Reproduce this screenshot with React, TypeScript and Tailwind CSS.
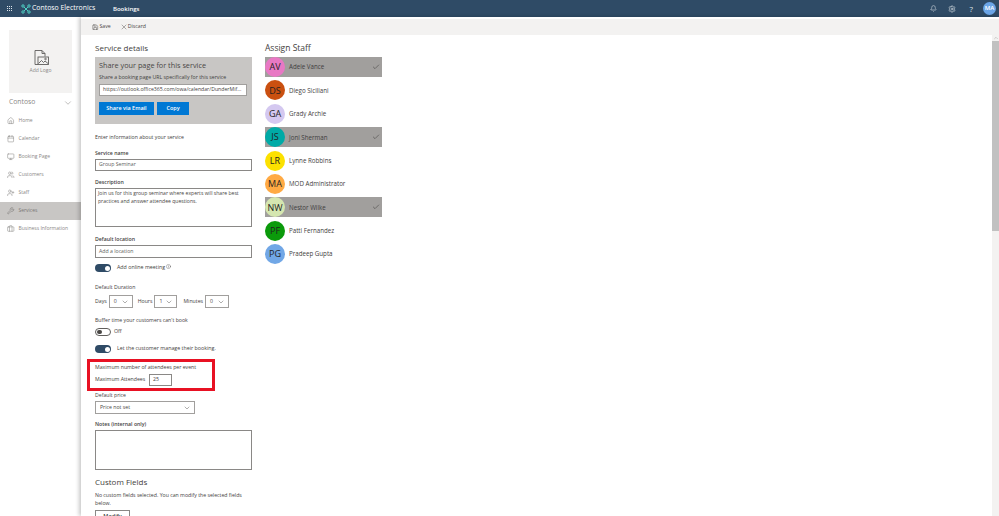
import React from "react";
import { Bell, Settings, ChevronDown, Check, Home, Calendar, Monitor, Users, UserPlus, Wrench, Briefcase, Save, X, Info, ChevronUp } from "lucide-react";

const font = { fontFamily: '"Open Sans", "Noto Sans", sans-serif' };

const staff = [
  { i: "AV", n: "Adele Vance", c: "bg-[#e878c4]", s: true },
  { i: "DS", n: "Diego Siciliani", c: "bg-[#ca5010]", s: false },
  { i: "GA", n: "Grady Archie", c: "bg-[#d4c8f0]", s: false },
  { i: "JS", n: "Joni Sherman", c: "bg-[#00aaa6]", s: true },
  { i: "LR", n: "Lynne Robbins", c: "bg-[#fce100]", s: false },
  { i: "MA", n: "MOD Administrator", c: "bg-[#ffaa44]", s: false },
  { i: "NW", n: "Nestor Wilke", c: "bg-[#d5e6b0]", s: true },
  { i: "PF", n: "Patti Fernandez", c: "bg-[#0b9a0b]", s: false },
  { i: "PG", n: "Pradeep Gupta", c: "bg-[#71a7e6]", s: false },
];

const nav = [
  { n: "Home", I: Home },
  { n: "Calendar", I: Calendar },
  { n: "Booking Page", I: Monitor },
  { n: "Customers", I: Users },
  { n: "Staff", I: UserPlus },
  { n: "Services", I: Wrench, a: true },
  { n: "Business Information", I: Briefcase },
];

function Toggle({ on }: { on: boolean }) {
  return on ? (
    <div className="w-[16px] h-[8px] rounded-full bg-[#2f4b66] flex items-center justify-end px-[1.5px] shrink-0">
      <div className="w-[5px] h-[5px] rounded-full bg-white" />
    </div>
  ) : (
    <div className="w-[16px] h-[8px] rounded-full border border-[#605e5c] bg-white flex items-center px-[1px] shrink-0">
      <div className="w-[4.5px] h-[4.5px] rounded-full bg-[#484644]" />
    </div>
  );
}

function Sel({ v, w }: { v: string; w: string }) {
  return (
    <div className={`${w} h-[13px] border border-[#a19f9d] flex items-center justify-between pl-[4px] pr-[3px] text-[5.2px] text-[#484644] bg-white`}>
      <span>{v}</span>
      <ChevronDown size={8} strokeWidth={1.5} className="text-[#605e5c]" />
    </div>
  );
}

export default function App() {
  return (
    <div style={font} className="w-[999px] h-[516px] overflow-hidden flex flex-col bg-white text-[#3f3e3d]">
      <header className="h-[17px] bg-[#2f4b66] flex items-center text-white shrink-0">
        <div className="w-[18px] flex justify-center">
          <div className="grid grid-cols-3 gap-[1px]">
            {Array.from({ length: 9 }).map((_, i) => (
              <div key={i} className="w-[1px] h-[1px] bg-[#dfe5ea]" />
            ))}
          </div>
        </div>
        <svg width="10" height="10" viewBox="0 0 10 10" className="ml-[3px]" fill="none" stroke="#4fd0c4" strokeWidth="1">
          <circle cx="2" cy="2" r="1.2" />
          <circle cx="8" cy="2" r="1.2" />
          <circle cx="2" cy="8" r="1.2" />
          <circle cx="8" cy="8" r="1.2" />
          <path d="M3 3l4 4M7 3L3 7" />
        </svg>
        <span className="ml-[1px] text-[6.9px] font-medium leading-none w-[81px] whitespace-nowrap">Contoso Electronics</span>
        <span className="text-[6px] font-semibold leading-none">Bookings</span>
        <div className="ml-auto flex items-center">
          <Bell size={7} strokeWidth={1.8} className="mr-[11px] text-[#dfe5ea]" />
          <Settings size={8} strokeWidth={1.8} className="mr-[14px] text-[#dfe5ea]" />
          <span className="mr-[10px] text-[8px] leading-none text-[#dfe5ea]">?</span>
          <div className="w-[13px] h-[13px] mr-[3px] rounded-full bg-[#6ba5e7] text-[6px] flex items-center justify-center text-white font-semibold">MA</div>
        </div>
      </header>

      <div className="flex flex-1 min-h-0">
        <aside className="w-[81px] shrink-0 flex flex-col pt-[13px] text-[#8a8886]">
          <div className="mx-[9px] w-[63px] h-[63px] bg-[#f3f2f1] flex flex-col items-center justify-center gap-[1px]">
            <svg width="17" height="17" viewBox="0 0 17 17" fill="none" stroke="#605e5c" strokeWidth="0.9">
              <path d="M3 15.5V1.5h7l3 3v3" />
              <path d="M10 1.5v3h3" />
              <path d="M3 15.5h3" />
              <rect x="6" y="8" width="10.5" height="7.5" />
              <path d="M6.5 14.5l3-3 2 2 1.5-1.5 3 2.5" />
              <circle cx="13.5" cy="10" r="0.8" />
            </svg>
            <span className="text-[5px]">Add Logo</span>
          </div>
          <div className="mx-[9px] mt-[1px] h-[17px] flex items-center justify-between text-[6.8px]">
            <span>Contoso</span>
            <ChevronDown size={10} strokeWidth={1.3} className="mr-[-1px]" />
          </div>
          <nav className="flex flex-col mt-[1px]">
            {nav.map(({ n, I, a }) => (
              <div key={n} className={`h-[18px] flex items-center pl-[7px] gap-[4px] text-[5px] whitespace-nowrap ${a ? "bg-[#c8c6c4] text-[#797775]" : ""}`}>
                <I size={7.5} strokeWidth={1.7} />
                <span>{n}</span>
              </div>
            ))}
          </nav>
        </aside>

        <main className="flex-1 min-w-0 flex flex-col shadow-[-2px_0_4px_rgba(0,0,0,0.22)] relative pt-[2px]">
          <div className="h-[16px] bg-[#f3f2f1] flex items-center pl-[11px] text-[5.2px] shrink-0 text-[#484644]">
            <Save size={6.5} strokeWidth={1.8} className="mr-[1px]" />
            <span>Save</span>
            <X size={8} strokeWidth={1.3} className="ml-[9px] mr-[0px]" />
            <span>Discard</span>
          </div>

          <div className="flex-1 flex min-h-0 overflow-hidden">
            <div className="flex-1 flex pl-[14px] pt-[7px] gap-[13px] min-w-0">
              <section className="w-[157px] shrink-0 relative">
                <h2 className="text-[8px] leading-[12px] h-[15px]">Service details</h2>
                <div className="h-[67px] bg-[#c8c6c4] pt-[4px] px-[4px] flex flex-col">
                  <div className="text-[7.3px] leading-[9px] text-[#484644]">Share your page for this service</div>
                  <div className="text-[5.2px] leading-[7px] mt-[4px]">Share a booking page URL specifically for this service</div>
                  <div className="mt-[3px] h-[12px] bg-white border border-[#a19f9d] flex items-center pl-[3px] text-[5.2px] whitespace-nowrap overflow-hidden w-[148px]">https://outlook.office365.com/owa/calendar/DunderMif...</div>
                  <div className="flex gap-[3px] mt-[6px]">
                    <div className="w-[55px] h-[13px] bg-[#0078d4] text-white text-[5.5px] font-semibold flex items-center justify-center">Share via Email</div>
                    <div className="w-[32px] h-[13px] bg-[#0078d4] text-white text-[5.5px] font-semibold flex items-center justify-center">Copy</div>
                  </div>
                </div>

                <p className="text-[5.2px] leading-[7px] mt-[10px]">Enter information about your service</p>
                <label className="block text-[5.2px] font-semibold leading-[7px] mt-[9px]">Service name</label>
                <div className="mt-[2px] h-[12px] border border-[#8a8886] flex items-center pl-[3px] text-[5.2px] text-[#605e5c]">Group Seminar</div>
                <label className="block text-[5.2px] font-semibold leading-[7px] mt-[8px]">Description</label>
                <div className="mt-[2px] h-[39px] border border-[#8a8886] px-[2px] py-[1px] text-[5.1px] leading-[7.5px] text-[#484644]">Join us for this group seminar where experts will share best practices and answer attendee questions.</div>
                <label className="block text-[5.2px] font-semibold leading-[7px] mt-[9px]">Default location</label>
                <div className="mt-[2px] h-[13px] border border-[#8a8886] flex items-center pl-[3px] text-[5.2px] text-[#605e5c]">Add a location</div>
                <div className="flex items-center mt-[6px] h-[8px] text-[5.3px]">
                  <Toggle on />
                  <span className="ml-[6px]">Add online meeting</span>
                  <Info size={5} strokeWidth={1.6} className="ml-[1px] mt-[-3px]" />
                </div>
                <p className="text-[5.2px] leading-[7px] mt-[12px]">Default Duration</p>
                <div className="flex items-center text-[5.2px] mt-[4px] h-[13px]">
                  <span className="mr-[2px]">Days</span>
                  <Sel v="0" w="w-[24px]" />
                  <span className="ml-[5px] mr-[2px]">Hours</span>
                  <Sel v="1" w="w-[23px]" />
                  <span className="ml-[6px] mr-[2px]">Minutes</span>
                  <Sel v="0" w="w-[24px]" />
                </div>
                <p className="text-[5.2px] leading-[7px] mt-[9px]">Buffer time your customers can't book</p>
                <div className="flex items-center mt-[4px] h-[8px] text-[5.3px]">
                  <Toggle on={false} />
                  <span className="ml-[3px]">Off</span>
                </div>
                <div className="flex items-center mt-[9px] h-[8px] text-[5.3px]">
                  <Toggle on />
                  <span className="ml-[6px]">Let the customer manage their booking.</span>
                </div>
                <p className="text-[5.2px] leading-[7px] mt-[11px]">Maximum number of attendees per event</p>
                <div className="flex items-center mt-[3px] h-[12px] text-[5.2px]">
                  <span className="w-[54px]">Maximum Attendees</span>
                  <div className="w-[23px] h-[12px] border border-[#8a8886] flex items-center pl-[3px]">25</div>
                </div>
                <div className="absolute left-[-8px] top-[317px] w-[128px] h-[32px] border-[3px] border-[#e81123] pointer-events-none" />
                <p className="text-[5.2px] leading-[7px] mt-[6px]">Default price</p>
                <div className="mt-[2px]"><Sel v="Price not set" w="w-[100px]" /></div>
                <label className="block text-[5.2px] font-semibold leading-[7px] mt-[7px]">Notes (internal only)</label>
                <div className="mt-[2px] h-[40px] border border-[#8a8886]" />
                <h2 className="text-[8px] leading-[12px] mt-[6px]">Custom Fields</h2>
                <p className="text-[5.2px] leading-[8px] mt-[3px]">No custom fields selected. You can modify the selected fields below.</p>
                <div className="mt-[3px] w-[35px] h-[13px] border border-[#8a8886] flex items-center justify-center text-[5.5px] font-semibold">Modify</div>
              </section>

              <section className="w-[117px] shrink-0">
                <h2 className="text-[8.5px] leading-[12px] h-[15px]">Assign Staff</h2>
                <div className="flex flex-col gap-[3.4px]">
                  {staff.map((p) => (
                    <div key={p.i} className={`h-[20px] flex items-center text-[6.2px] ${p.s ? "bg-[#a19f9d]" : ""}`}>
                      <div className={`w-[20px] h-[20px] rounded-full ${p.c} text-[#1f1f1f] text-[9px] flex items-center justify-center shrink-0`}>{p.i}</div>
                      <span className="ml-[4px] flex-1">{p.n}</span>
                      {p.s && <Check size={8} strokeWidth={1.8} className="mr-[2px] text-[#484644]" />}
                    </div>
                  ))}
                </div>
              </section>
            </div>

            <div className="w-[7px] bg-[#f3f2f1] flex flex-col items-center shrink-0">
              <ChevronUp size={6} strokeWidth={1.8} className="text-[#a19f9d]" />
              <div className="w-[7px] h-[190px] bg-[#c1c1c1]" />
            </div>
          </div>
        </main>
      </div>
    </div>
  );
}
